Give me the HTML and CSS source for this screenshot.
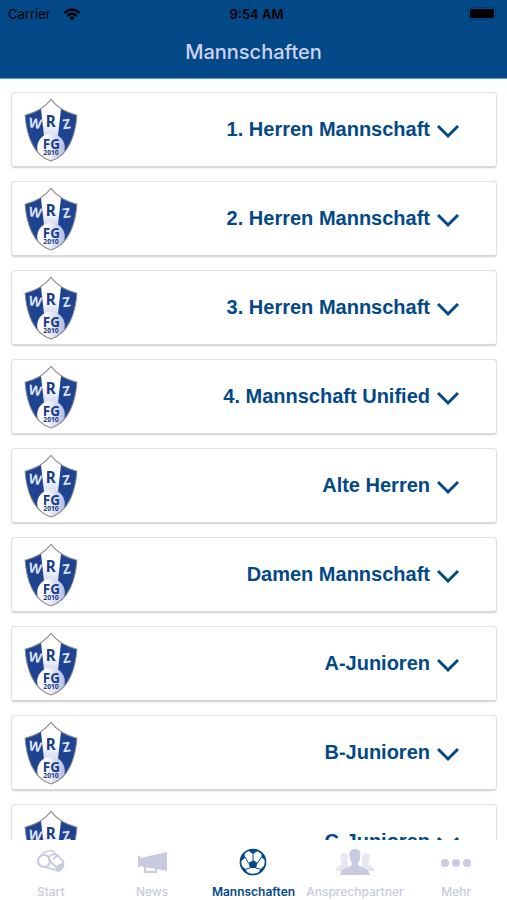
FILE: index.html
```html
<!DOCTYPE html>
<html lang="de">
<head>
  <meta charset="UTF-8" />
  <meta name="viewport" content="width=device-width, initial-scale=1.0" />
  <title>Mannschaften</title>
  <link rel="stylesheet" href="styles.css">
</head>
<body>
  <svg class="sprite" aria-hidden="true">
    <defs>
      <linearGradient id="shieldFill" x1="0" y1="0" x2="0" y2="1">
        <stop offset="0.35" stop-color="#ffffff" />
        <stop offset="0.75" stop-color="#b9c0e6" />
      </linearGradient>
      <linearGradient id="ballFill" x1="0" y1="0" x2="1" y2="0">
        <stop offset="0.3" stop-color="#ffffff" />
        <stop offset="1" stop-color="#b4bbe4" />
      </linearGradient>
      <clipPath id="shieldClip">
        <path d="M80 4C65 24 40 42 3 51C7 105 25 170 80 187C135 170 153 105 157 51C120 42 95 24 80 4Z" />
      </clipPath>
    </defs>
    <symbol id="crest" viewBox="0 0 160 190">
      <g clip-path="url(#shieldClip)">
        <rect width="160" height="190" fill="url(#shieldFill)" />
        <path d="M0 52L50 30L60 120L52 190H0Z" fill="#1d4391" />
        <path d="M160 52L110 30L100 120L108 190H160Z" fill="#1d4391" />
        <circle cx="80" cy="147" r="41" fill="url(#ballFill)" />
      </g>
      <path d="M80 4C65 24 40 42 3 51C7 105 25 170 80 187C135 170 153 105 157 51C120 42 95 24 80 4Z" fill="none" stroke="#8b8c8c" stroke-width="3" />
    </symbol>
    <symbol id="chevron" viewBox="0 0 22 16">
      <path d="M1 3L11 13L21 3" fill="none" stroke="currentColor" stroke-width="3" />
    </symbol>
  </svg>

  <header class="header">
    <div class="status">
      <div class="carrier">
        <span>Carrier</span>
        <svg width="18" height="13" viewBox="0 0 18 13" aria-hidden="true">
          <path d="M1.5 4.8Q9-1.8 16.5 4.8M4.3 7.7Q9 3.7 13.7 7.7" fill="none" stroke="#000" stroke-width="2.3" />
          <path d="M6.3 9.6Q9 7.6 11.7 9.6L9 12.5Z" />
        </svg>
      </div>
      <span class="time">9:54 AM</span>
      <svg class="battery" width="31" height="14" viewBox="0 0 31 14" aria-hidden="true">
        <rect x="0.5" y="0.5" width="27" height="12" rx="4" fill="none" stroke="#003a70" />
        <rect x="2" y="2" width="24" height="9" rx="2" />
        <path d="M29 4.5Q31 6.5 29 8.5Z" fill="#003a70" />
      </svg>
    </div>
    <h1>Mannschaften</h1>
  </header>

  <main class="teams">
    <button type="button" class="team">
      <svg class="crest" viewBox="0 0 160 190">
        <use href="#crest" />
        <text x="33" y="90" class="side" transform="rotate(10 33 76)">W</text>
        <text x="79" y="86" class="middle">R</text>
        <text x="126" y="91" class="side" transform="rotate(-8 126 76)">Z</text>
        <text x="81" y="151" class="club">FG</text>
        <text x="80" y="168" class="year">2010</text>
      </svg>
      <span>1. Herren Mannschaft</span>
      <svg class="chevron"><use href="#chevron" /></svg>
    </button>
    <button type="button" class="team">
      <svg class="crest" viewBox="0 0 160 190">
        <use href="#crest" />
        <text x="33" y="90" class="side" transform="rotate(10 33 76)">W</text>
        <text x="79" y="86" class="middle">R</text>
        <text x="126" y="91" class="side" transform="rotate(-8 126 76)">Z</text>
        <text x="81" y="151" class="club">FG</text>
        <text x="80" y="168" class="year">2010</text>
      </svg>
      <span>2. Herren Mannschaft</span>
      <svg class="chevron"><use href="#chevron" /></svg>
    </button>
    <button type="button" class="team">
      <svg class="crest" viewBox="0 0 160 190">
        <use href="#crest" />
        <text x="33" y="90" class="side" transform="rotate(10 33 76)">W</text>
        <text x="79" y="86" class="middle">R</text>
        <text x="126" y="91" class="side" transform="rotate(-8 126 76)">Z</text>
        <text x="81" y="151" class="club">FG</text>
        <text x="80" y="168" class="year">2010</text>
      </svg>
      <span>3. Herren Mannschaft</span>
      <svg class="chevron"><use href="#chevron" /></svg>
    </button>
    <button type="button" class="team">
      <svg class="crest" viewBox="0 0 160 190">
        <use href="#crest" />
        <text x="33" y="90" class="side" transform="rotate(10 33 76)">W</text>
        <text x="79" y="86" class="middle">R</text>
        <text x="126" y="91" class="side" transform="rotate(-8 126 76)">Z</text>
        <text x="81" y="151" class="club">FG</text>
        <text x="80" y="168" class="year">2010</text>
      </svg>
      <span>4. Mannschaft Unified</span>
      <svg class="chevron"><use href="#chevron" /></svg>
    </button>
    <button type="button" class="team">
      <svg class="crest" viewBox="0 0 160 190">
        <use href="#crest" />
        <text x="33" y="90" class="side" transform="rotate(10 33 76)">W</text>
        <text x="79" y="86" class="middle">R</text>
        <text x="126" y="91" class="side" transform="rotate(-8 126 76)">Z</text>
        <text x="81" y="151" class="club">FG</text>
        <text x="80" y="168" class="year">2010</text>
      </svg>
      <span>Alte Herren</span>
      <svg class="chevron"><use href="#chevron" /></svg>
    </button>
    <button type="button" class="team">
      <svg class="crest" viewBox="0 0 160 190">
        <use href="#crest" />
        <text x="33" y="90" class="side" transform="rotate(10 33 76)">W</text>
        <text x="79" y="86" class="middle">R</text>
        <text x="126" y="91" class="side" transform="rotate(-8 126 76)">Z</text>
        <text x="81" y="151" class="club">FG</text>
        <text x="80" y="168" class="year">2010</text>
      </svg>
      <span>Damen Mannschaft</span>
      <svg class="chevron"><use href="#chevron" /></svg>
    </button>
    <button type="button" class="team">
      <svg class="crest" viewBox="0 0 160 190">
        <use href="#crest" />
        <text x="33" y="90" class="side" transform="rotate(10 33 76)">W</text>
        <text x="79" y="86" class="middle">R</text>
        <text x="126" y="91" class="side" transform="rotate(-8 126 76)">Z</text>
        <text x="81" y="151" class="club">FG</text>
        <text x="80" y="168" class="year">2010</text>
      </svg>
      <span>A-Junioren</span>
      <svg class="chevron"><use href="#chevron" /></svg>
    </button>
    <button type="button" class="team">
      <svg class="crest" viewBox="0 0 160 190">
        <use href="#crest" />
        <text x="33" y="90" class="side" transform="rotate(10 33 76)">W</text>
        <text x="79" y="86" class="middle">R</text>
        <text x="126" y="91" class="side" transform="rotate(-8 126 76)">Z</text>
        <text x="81" y="151" class="club">FG</text>
        <text x="80" y="168" class="year">2010</text>
      </svg>
      <span>B-Junioren</span>
      <svg class="chevron"><use href="#chevron" /></svg>
    </button>
    <button type="button" class="team">
      <svg class="crest" viewBox="0 0 160 190">
        <use href="#crest" />
        <text x="33" y="90" class="side" transform="rotate(10 33 76)">W</text>
        <text x="79" y="86" class="middle">R</text>
        <text x="126" y="91" class="side" transform="rotate(-8 126 76)">Z</text>
        <text x="81" y="151" class="club">FG</text>
        <text x="80" y="168" class="year">2010</text>
      </svg>
      <span>C-Junioren</span>
      <svg class="chevron"><use href="#chevron" /></svg>
    </button>
  </main>

  <nav class="tabs">
    <a href="#start">
      <svg width="40" height="30" viewBox="0 0 40 30" fill="none" stroke="currentColor" aria-hidden="true">
        <circle cx="13" cy="14" r="6" stroke-width="2.2" />
        <path d="M10 8Q14 3 22 4L26 8" stroke-width="1.3" />
        <path d="M17 10L23 7Q25 7 27 9L32 14Q33 17 32 20L28 24L24 23L14 20" stroke-width="1.8" />
        <path d="M17 12L26 21M22 12L26 9" stroke-width="1.8" />
        <path d="M24 20L32 15L32 20L28 24L25 23Z" fill="currentColor" stroke="none" />
      </svg>
      <span>Start</span>
    </a>
    <a href="#news">
      <svg width="40" height="30" viewBox="0 0 40 30" aria-hidden="true">
        <path d="M6 9H8V11L35 5V24L25 22V26H12V20L8 19V20H6ZM14 20.5V24H23V21.5Z" fill="currentColor" fill-rule="evenodd" />
      </svg>
      <span>News</span>
    </a>
    <a href="#mannschaften" class="active" aria-current="page">
      <svg width="40" height="30" viewBox="0 0 40 30" aria-hidden="true">
        <circle cx="20" cy="15" r="12.5" fill="#fff" stroke="currentColor" stroke-width="1.7" />
        <path d="M15.500 16L20.500 13L24.500 16L23 21H17Z" fill="currentColor" />
        <path d="M15 3.500L20 7L25.500 3.500L23 2.500H17ZM8 14L12 11L11.500 6L8 10ZM32 13L28.500 10.500L28.500 6L32 10ZM9 19L13 22.500L14 26L10 23ZM31 19L27 22.500L26 26L30 23Z" fill="currentColor" />
        <path d="M20 6V13M12 10L15.500 16M28.500 10L24.500 16M13 22L17 21M27 22L23 21" fill="none" stroke="currentColor" />
      </svg>
      <span>Mannschaften</span>
    </a>
    <a href="#ansprechpartner">
      <svg width="40" height="30" viewBox="0 0 40 30" fill="currentColor" aria-hidden="true">
        <path d="M1 24Q0 20 7 17.500Q3 6 9 6Q14 6 13 14V24ZM39 24Q40 20 33 17.500Q37 6 31 6Q26 6 27 14V24Z" opacity="0.45" />
        <path d="M20 2C14.500 2 14 6 15 11Q15.500 15 17 16.500V18L7 23L5 28H35L33 23L23 18V16.500Q24.500 15 25 11C26 6 25.500 2 20 2Z" />
      </svg>
      <span>Ansprechpartner</span>
    </a>
    <a href="#mehr">
      <svg width="40" height="30" viewBox="0 0 40 30" fill="currentColor" aria-hidden="true">
        <circle cx="9" cy="16" r="4" />
        <circle cx="20" cy="16" r="4" />
        <circle cx="31" cy="16" r="4" />
      </svg>
      <span>Mehr</span>
    </a>
  </nav>
</body>
</html>
```

FILE: styles.css
```css
* {
  box-sizing: border-box;
}

body {
  display: flex;
  flex-direction: column;
  height: 100vh;
  margin: 0;
  background-color: #fff;
  font-family: Inter, sans-serif;
}

.sprite {
  position: absolute;
  width: 0;
  height: 0;
}

.header {
  flex: none;
  background-color: #034887;
  border-bottom: 1px solid #5ba3d0;
}

.status {
  display: grid;
  grid-template-columns: 1fr auto 1fr;
  align-items: center;
  height: 28px;
  padding: 0 8px;
  font-size: 13px;
  color: #000;
}

.carrier {
  display: flex;
  align-items: center;
  gap: 12px;
}

.time {
  padding-left: 6px;
  font-weight: 600;
}

.battery {
  justify-self: end;
}

h1 {
  margin: 0;
  padding: 14px 0 16px;
  font-size: 20px;
  font-weight: 500;
  line-height: 20px;
  text-align: center;
  color: #ced2f2;
}

.teams {
  flex: 1;
  display: flex;
  flex-direction: column;
  gap: 13px;
  min-height: 0;
  padding: 13px 10px 13px 11px;
  overflow-y: auto;
  scrollbar-width: none;
}

.team {
  flex: none;
  display: flex;
  align-items: center;
  height: 76px;
  padding: 0 37px 0 12px;
  background-color: #fff;
  border: 1px solid #e0e0e0;
  border-bottom: 2px solid #d8d8d8;
  border-radius: 4px;
  box-shadow: 0 1px 2px rgba(0, 0, 0, 0.06);
  font-family: "Liberation Sans", Arial, sans-serif;
  font-size: 20px;
  font-weight: 700;
  color: #034887;
  cursor: pointer;
}

.team span {
  margin-left: auto;
}

.crest {
  width: 54px;
  height: 64px;
}

.crest text {
  font-family: "Noto Sans", sans-serif;
  font-weight: 700;
  text-anchor: middle;
  fill: #183c86;
}

.crest .side {
  font-size: 40px;
  fill: #dde2f5;
}

.crest .middle {
  font-size: 45px;
}

.crest .club {
  font-size: 40px;
}

.crest .year {
  font-size: 20px;
}

.chevron {
  width: 22px;
  height: 16px;
  margin-top: 2px;
  margin-left: 7px;
}

.tabs {
  flex: none;
  display: grid;
  grid-template-columns: repeat(5, 1fr);
  height: 60px;
  background-color: #fff;
}

.tabs a {
  display: flex;
  flex-direction: column;
  align-items: center;
  gap: 7px;
  padding-top: 7px;
  font-size: 12px;
  font-weight: 500;
  line-height: 16px;
  color: #c9cae0;
  text-decoration: none;
}

.tabs .active {
  font-weight: 600;
  color: #034887;
}
```
